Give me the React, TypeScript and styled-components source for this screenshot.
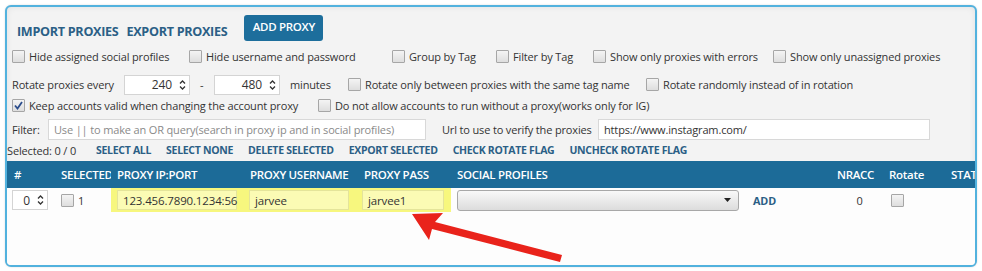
import React from 'react';
import styled, { createGlobalStyle } from 'styled-components';

const GlobalStyle = createGlobalStyle`
    html, body {
        margin: 0;
        padding: 0;
        background: #ffffff;
    }
    body {
        font-family: 'Open Sans', 'Noto Sans', sans-serif;
        font-size: 11px;
        letter-spacing: -0.15px;
        color: #333333;
    }
`;

const Page = styled.div`
    position: relative;
    width: 982px;
    height: 271px;
    padding: 5px 5px 0 5px;
    box-sizing: border-box;
`;

const Panel = styled.div`
    height: 262px;
    box-sizing: border-box;
    border: 2px solid #52b2de;
    border-radius: 6px;
    background: #f3f3f3;
    box-shadow: inset 0 0 6px rgba(0, 0, 0, 0.08), 0 0 2px rgba(0, 0, 0, 0.15);
    overflow: hidden;
    display: flex;
    flex-direction: column;
    padding-top: 8px;
`;

const Toolbar = styled.div`
    display: flex;
    align-items: center;
    height: 26px;
    padding-left: 10px;
`;

const ToolbarLink = styled.span`
    font-weight: 700;
    font-size: 12.6px;
    letter-spacing: -0.3px;
    color: #2b5f86;
    margin-right: 8px;
    margin-top: 6px;
`;

const PrimaryButton = styled.button`
    margin-left: 9px;
    height: 26px;
    width: 79px;
    border: none;
    border-radius: 3px;
    background: #1d6e9c;
    color: #ffffff;
    font-family: inherit;
    font-weight: 600;
    font-size: 11.5px;
    letter-spacing: -0.3px;
    padding: 0 0 4px 0;
`;

const OptionRow = styled.div<{ $top: number; $h?: number }>`
    display: flex;
    align-items: center;
    height: ${(p) => p.$h ?? 20}px;
    margin-top: ${(p) => p.$top}px;
    padding-left: 5px;
    white-space: nowrap;
`;

const Option = styled.label<{ $w?: number }>`
    display: flex;
    align-items: center;
    gap: 4px;
    flex: 0 0 ${(p) => (p.$w ? `${p.$w}px` : 'auto')};
`;

const Box = styled.span`
    position: relative;
    width: 11px;
    height: 11px;
    border: 1px solid #a6a6a6;
    border-radius: 1px;
    background: linear-gradient(#f4f4f4, #dedede);
    flex: 0 0 auto;
    svg {
        position: absolute;
        left: 0;
        top: 0;
    }
`;

const CheckBox = ({ checked }: { checked?: boolean }) => (
    <Box>
        {checked && (
            <svg width="11" height="11" viewBox="0 0 11 11">
                <path d="M2 5.5 L4.5 8.5 L9 2" fill="none" stroke="#2c4d8c" strokeWidth="1.8" />
            </svg>
        )}
    </Box>
);

const Text = styled.span<{ $ml?: number; $w?: number }>`
    margin-left: ${(p) => p.$ml ?? 0}px;
    flex: 0 0 ${(p) => (p.$w ? `${p.$w}px` : 'auto')};
`;

const SpinBox = styled.div<{ $w: number }>`
    display: flex;
    align-items: center;
    justify-content: flex-end;
    width: ${(p) => p.$w}px;
    height: 20px;
    box-sizing: border-box;
    background: #ffffff;
    border: 1px solid #d4d4d4;
    padding-right: 3px;
    font-size: 12px;
    gap: 7px;
    flex: 0 0 auto;
`;

const Spin = ({ value, width }: { value: string; width: number }) => (
    <SpinBox $w={width}>
        <span>{value}</span>
        <svg width="7" height="12" viewBox="0 0 7 12">
            <path d="M1 4.5 L3.5 2 L6 4.5" fill="none" stroke="#333" strokeWidth="1.3" />
            <path d="M1 7.5 L3.5 10 L6 7.5" fill="none" stroke="#333" strokeWidth="1.3" />
        </svg>
    </SpinBox>
);

const TextInput = styled.div<{ $w: number; $muted?: boolean }>`
    width: ${(p) => p.$w}px;
    height: 21px;
    box-sizing: border-box;
    background: #ffffff;
    border: 1px solid #d8d8d8;
    padding: 2px 5px 0 5px;
    color: ${(p) => (p.$muted ? '#8a8a8a' : '#333333')};
    overflow: hidden;
    flex: 0 0 auto;
`;

const SelectionBar = styled.div`
    display: flex;
    align-items: center;
    height: 20px;
    margin-top: 1px;
    padding-bottom: 2px;
    box-sizing: border-box;
    white-space: nowrap;
`;

const ActionLink = styled.span<{ $ml: number }>`
    margin-left: ${(p) => p.$ml}px;
    font-weight: 700;
    font-size: 10.5px;
    letter-spacing: -0.3px;
    color: #2b5f86;
`;

const cols = '50px 54px 133px 113px 94px 380px 52px 62px 1fr';

const HeaderRow = styled.div`
    display: grid;
    grid-template-columns: ${cols};
    height: 27px;
    background: #1c6b98;
    color: #ffffff;
    font-weight: 600;
    font-size: 11.5px;
    letter-spacing: -0.3px;
    align-items: center;
    white-space: nowrap;
`;

const HeadCell = styled.div<{ $pl?: number }>`
    padding-left: ${(p) => p.$pl ?? 6}px;
    overflow: hidden;
`;

const Body = styled.div`
    flex: 1;
    background: #fdfdfd;
`;

const DataRow = styled.div`
    display: grid;
    grid-template-columns: ${cols};
    height: 24px;
    align-items: center;
`;

const Cell = styled.div<{ $pl?: number; $hl?: boolean; $center?: boolean }>`
    display: flex;
    align-items: center;
    gap: 4px;
    height: 100%;
    padding-left: ${(p) => p.$pl ?? 5}px;
    background: ${(p) => (p.$hl ? '#f7f77e' : 'transparent')};
    justify-content: ${(p) => (p.$center ? 'center' : 'flex-start')};
`;

const YellowInput = styled.div<{ $w: number }>`
    width: ${(p) => p.$w}px;
    height: 20px;
    box-sizing: border-box;
    border: 1px solid #e4e49a;
    background: #fbfbb4;
    padding: 2px 5px 0 5px;
    font-size: 11.5px;
`;

const Select = styled.div`
    width: 282px;
    height: 21px;
    box-sizing: border-box;
    border: 1px solid #a8a8a8;
    border-radius: 3px;
    background: linear-gradient(#f9f9f9, #dcdcdc);
    display: flex;
    align-items: center;
    justify-content: flex-end;
    padding-right: 7px;
`;

const AddLink = styled.span`
    margin-left: 10px;
    font-weight: 700;
    font-size: 10.8px;
    color: #2b5f86;
`;

const Arrow = styled.svg`
    position: absolute;
    left: 0;
    top: 0;
    pointer-events: none;
`;

export default function App() {
    return (
        <Page>
            <GlobalStyle />
            <Panel>
                <Toolbar>
                    <ToolbarLink>IMPORT PROXIES</ToolbarLink>
                    <ToolbarLink>EXPORT PROXIES</ToolbarLink>
                    <PrimaryButton>ADD PROXY</PrimaryButton>
                </Toolbar>

                <OptionRow $top={5}>
                    <Option $w={177}>
                        <CheckBox />
                        Hide assigned social profiles
                    </Option>
                    <Option $w={203}>
                        <CheckBox />
                        Hide username and password
                    </Option>
                    <Option $w={104}>
                        <CheckBox />
                        Group by Tag
                    </Option>
                    <Option $w={97}>
                        <CheckBox />
                        Filter by Tag
                    </Option>
                    <Option $w={180}>
                        <CheckBox />
                        Show only proxies with errors
                    </Option>
                    <Option>
                        <CheckBox />
                        Show only unassigned proxies
                    </Option>
                </OptionRow>

                <OptionRow $top={8} $h={21}>
                    <Text $w={112}>Rotate proxies every</Text>
                    <Spin value="240" width={66} />
                    <Text $ml={10} $w={14}>-</Text>
                    <Spin value="480" width={66} />
                    <Text $ml={10} $w={58}>minutes</Text>
                    <Option $w={298}>
                        <CheckBox />
                        Rotate only between proxies with the same tag name
                    </Option>
                    <Option>
                        <CheckBox />
                        Rotate randomly instead of in rotation
                    </Option>
                </OptionRow>

                <OptionRow $top={0}>
                    <Option $w={306}>
                        <CheckBox checked />
                        Keep accounts valid when changing the account proxy
                    </Option>
                    <Option>
                        <CheckBox />
                        Do not allow accounts to run without a proxy(works only for IG)
                    </Option>
                </OptionRow>

                <OptionRow $top={4} $h={21}>
                    <Text $w={36}>Filter:</Text>
                    <TextInput $w={378} $muted>
                        Use || to make an OR query(search in proxy ip and in social profiles)
                    </TextInput>
                    <Text $ml={16} $w={156}>Url to use to verify the proxies</Text>
                    <TextInput $w={332}>https://www.instagram.com/</TextInput>
                </OptionRow>

                <SelectionBar>
                    <Text $w={89}>Selected: 0 / 0</Text>
                    <ActionLink $ml={0}>SELECT ALL</ActionLink>
                    <ActionLink $ml={15}>SELECT NONE</ActionLink>
                    <ActionLink $ml={15}>DELETE SELECTED</ActionLink>
                    <ActionLink $ml={15}>EXPORT SELECTED</ActionLink>
                    <ActionLink $ml={15}>CHECK ROTATE FLAG</ActionLink>
                    <ActionLink $ml={15}>UNCHECK ROTATE FLAG</ActionLink>
                </SelectionBar>

                <HeaderRow>
                    <HeadCell $pl={7}>#</HeadCell>
                    <HeadCell $pl={4}>SELECTED</HeadCell>
                    <HeadCell>PROXY IP:PORT</HeadCell>
                    <HeadCell>PROXY USERNAME</HeadCell>
                    <HeadCell $pl={7}>PROXY PASS</HeadCell>
                    <HeadCell>SOCIAL PROFILES</HeadCell>
                    <HeadCell>NRACC</HeadCell>
                    <HeadCell>Rotate</HeadCell>
                    <HeadCell>STATUS</HeadCell>
                </HeaderRow>

                <Body>
                    <DataRow>
                        <Cell $pl={5}>
                            <Spin value="0" width={36} />
                        </Cell>
                        <Cell $pl={4}>
                            <CheckBox />
                            <span>1</span>
                        </Cell>
                        <Cell $hl $pl={6}>
                            <YellowInput $w={120}>123.456.7890.1234:56</YellowInput>
                        </Cell>
                        <Cell $hl>
                            <YellowInput $w={100}>jarvee</YellowInput>
                        </Cell>
                        <Cell $hl>
                            <YellowInput $w={82}>jarvee1</YellowInput>
                        </Cell>
                        <Cell $pl={6}>
                            <Select>
                                <svg width="7" height="4" viewBox="0 0 7 4">
                                    <path d="M0 0 L7 0 L3.5 4 Z" fill="#222" />
                                </svg>
                            </Select>
                            <AddLink>ADD</AddLink>
                        </Cell>
                        <Cell $center>0</Cell>
                        <Cell $pl={8}>
                            <CheckBox />
                        </Cell>
                        <Cell />
                    </DataRow>
                </Body>
            </Panel>
            <Arrow width="982" height="271" viewBox="0 0 982 271">
                <polygon
                    points="412,214 443,213 435,222 562,255 560,262 432,229 429,240"
                    fill="#e9231b"
                />
            </Arrow>
        </Page>
    );
}
